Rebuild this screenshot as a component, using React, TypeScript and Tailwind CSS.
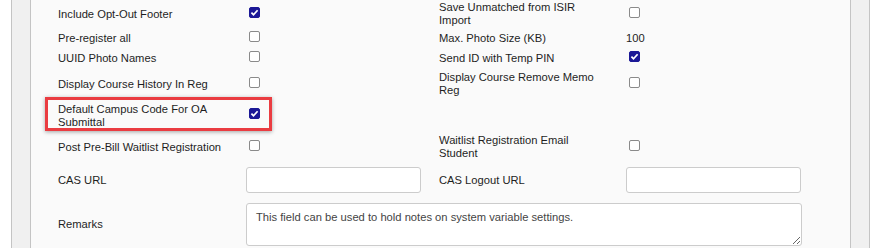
import type { ReactNode } from 'react';

const font = { fontFamily: '"Liberation Sans", Arial, sans-serif' };

function Check({ checked = false }: { checked?: boolean }) {
  return (
    <span className="relative ml-[3px] inline-flex h-[11px] w-[11px]">
      <input
        type="checkbox"
        readOnly
        checked={checked}
        className={`h-[11px] w-[11px] appearance-none rounded-[2px] border ${
          checked ? 'border-[#1b1896] bg-[#1b1896]' : 'border-[#8a8a8a] bg-white'
        }`}
      />
      {checked && (
        <svg viewBox="0 0 11 11" className="pointer-events-none absolute inset-0 h-[11px] w-[11px]">
          <path d="M2.4 5.6 L4.5 7.7 L8.6 3.2" fill="none" stroke="white" strokeWidth="1.7" />
        </svg>
      )}
    </span>
  );
}

function Label({ children, wide = false }: { children: ReactNode; wide?: boolean }) {
  return <div className={`${wide ? 'w-[186px]' : 'w-[166px]'} pl-[4px] leading-[12.6px]`}>{children}</div>;
}

function Row({ h, children }: { h: string; children: ReactNode }) {
  return <div className={`relative flex items-center ${h}`}>{children}</div>;
}

function Input() {
  return <div className="h-[26px] w-[175px] rounded-[3px] border border-[#cccccc] bg-white" />;
}

export default function App() {
  const c1 = 'w-[192px] shrink-0';
  const c2 = 'w-[189px] shrink-0';
  const c3 = 'w-[191px] shrink-0';
  const c4 = 'w-[190px] shrink-0';

  return (
    <div className="flex h-[248px] w-[880px] overflow-hidden bg-white text-[11.2px] text-[#1e1e1e]" style={font}>
      <div className="w-[11px] shrink-0" />
      <div className="w-[20px] shrink-0 border-x border-[#c4c4c4] bg-[#f0f0f0]" />
      <div className="w-[819px] shrink-0 bg-[#fafafa] pl-[23px]">
        <Row h="h-[28px]">
          <div className={c1}><Label wide>Include Opt-Out Footer</Label></div>
          <div className={c2}><Check checked /></div>
          <div className={c3}><Label>Save Unmatched from ISIR Import</Label></div>
          <div className={c4}><Check /></div>
        </Row>
        <Row h="h-[20px]">
          <div className={c1}><Label wide>Pre-register all</Label></div>
          <div className={c2}><Check /></div>
          <div className={c3}><Label>Max. Photo Size (KB)</Label></div>
          <div className={c4}>100</div>
        </Row>
        <Row h="h-[20px]">
          <div className={c1}><Label wide>UUID Photo Names</Label></div>
          <div className={c2}><Check /></div>
          <div className={c3}><Label>Send ID with Temp PIN</Label></div>
          <div className={c4}><Check checked /></div>
        </Row>
        <Row h="h-[32px]">
          <div className={c1}><Label wide>Display Course History In Reg</Label></div>
          <div className={c2}><Check /></div>
          <div className={c3}><Label>Display Course Remove Memo Reg</Label></div>
          <div className={c4}><Check /></div>
        </Row>
        <Row h="h-[31px]">
          <div className={c1}><Label wide>Default Campus Code For OA Submittal</Label></div>
          <div className={c2}><Check checked /></div>
          <div className={c3} />
          <div className={c4} />
          <div className="pointer-events-none absolute left-[-9px] top-[-3px] h-[34px] w-[227px] border-[3px] border-[#ea3c41] shadow-[0_1px_4px_rgba(0,0,0,0.35)]" />
        </Row>
        <Row h="h-[32px]">
          <div className={c1}><Label wide>Post Pre-Bill Waitlist Registration</Label></div>
          <div className={c2}><Check /></div>
          <div className={c3}><Label>Waitlist Registration Email Student</Label></div>
          <div className={c4}><Check /></div>
        </Row>
        <Row h="h-[34px]">
          <div className={c1}><Label wide>CAS URL</Label></div>
          <div className={c2}><Input /></div>
          <div className={c3}><Label>CAS Logout URL</Label></div>
          <div className={c4}><Input /></div>
        </Row>
        <div className="flex items-start pt-[6px]">
          <div className={`${c1} pt-[15px]`}><Label wide>Remarks</Label></div>
          <textarea
            readOnly
            value="This field can be used to hold notes on system variable settings."
            className="h-[43px] w-[556px] resize rounded-[3px] border border-[#cccccc] bg-white px-[9px] pt-[7px] text-[11.2px] leading-[13px] text-[#444]"
            style={font}
          />
        </div>
      </div>
      <div className="w-[20px] shrink-0 border-x border-[#c4c4c4] bg-[#f0f0f0]" />
      <div className="flex-1" />
    </div>
  );
}
